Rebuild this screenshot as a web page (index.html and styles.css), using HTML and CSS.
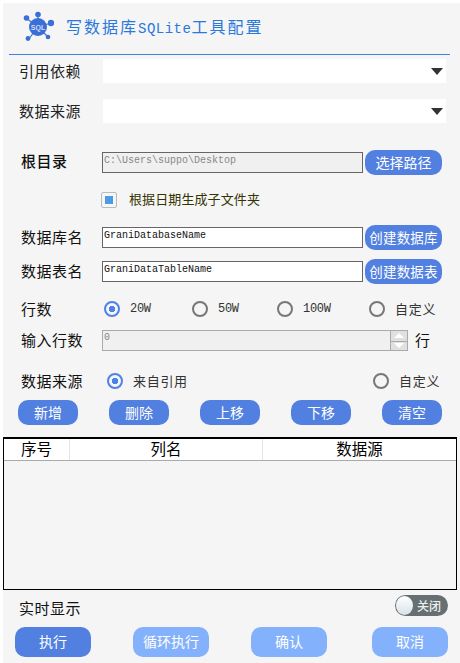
FILE: index.html
```html
<!doctype html>
<html>
<head>
	<title>写数据库SQLite工具配置</title>
	<meta charset="utf-8"/>
	<link rel="stylesheet" href="styles.css">
</head>
<body>
	<div class="app">
		<div class="header">
			<svg class="logo" width="32" height="32" viewBox="0 0 32 32">
				<g stroke="#3a6fd8" stroke-width="1.2">
					<line x1="16" y1="16" x2="4" y2="7"/>
					<line x1="16" y1="16" x2="16" y2="3"/>
					<line x1="16" y1="16" x2="29" y2="12"/>
					<line x1="16" y1="16" x2="6" y2="29"/>
					<line x1="16" y1="16" x2="26" y2="26"/>
				</g>
				<circle cx="4.5" cy="7" r="2.8" fill="#3a6fd8"/>
				<circle cx="16" cy="3.5" r="2.8" fill="#3a6fd8"/>
				<circle cx="29" cy="12" r="3.2" fill="#3a6fd8"/>
				<circle cx="6" cy="27.5" r="2.4" fill="#3a6fd8"/>
				<circle cx="26" cy="26" r="2.3" fill="#3a6fd8"/>
				<circle cx="16" cy="16" r="9" fill="#3a6fd8"/>
				<text x="16" y="18.5" class="logo-text" text-anchor="middle">SQL</text>
			</svg>
			<div class="title">写数据库<span class="latin">SQLite</span>工具配置</div>
		</div>

		<div class="select-row first">
			<span class="select-label">引用依赖</span>
			<div class="select"><span class="caret"></span></div>
		</div>
		<div class="select-row second">
			<span class="select-label">数据来源</span>
			<div class="select"><span class="caret"></span></div>
		</div>

		<div class="form-row root-row">
			<span class="label strong">根目录</span>
			<div class="input disabled">C:\Users\suppo\Desktop</div>
			<div class="btn side">选择路径</div>
		</div>

		<div class="check-row">
			<span class="checkbox"><span class="check-fill"></span></span>
			<span class="check-label">根据日期生成子文件夹</span>
		</div>

		<div class="form-row db-row">
			<span class="label">数据库名</span>
			<div class="input">GraniDatabaseName</div>
			<div class="btn side tight">创建数据库</div>
		</div>
		<div class="form-row table-row">
			<span class="label">数据表名</span>
			<div class="input">GraniDataTableName</div>
			<div class="btn side tight">创建数据表</div>
		</div>

		<div class="radio-row">
			<span class="label">行数</span>
			<div class="radio-item w20"><span class="radio on"></span><span class="radio-text mono">20W</span></div>
			<div class="radio-item w50"><span class="radio"></span><span class="radio-text mono">50W</span></div>
			<div class="radio-item w100"><span class="radio"></span><span class="radio-text mono">100W</span></div>
			<div class="radio-item"><span class="radio"></span><span class="radio-text">自定义</span></div>
		</div>

		<div class="count-row">
			<span class="label">输入行数</span>
			<div class="spin">
				<div class="spin-value">0</div>
				<div class="spin-btns">
					<div class="spin-btn"><span class="up"></span></div>
					<div class="spin-btn"><span class="down"></span></div>
				</div>
			</div>
			<span class="unit">行</span>
		</div>

		<div class="source-row">
			<span class="label">数据来源</span>
			<div class="radio-item from-ref"><span class="radio on"></span><span class="radio-text">来自引用</span></div>
			<div class="radio-item from-custom"><span class="radio"></span><span class="radio-text">自定义</span></div>
		</div>

		<div class="action-row">
			<div class="btn action">新增</div>
			<div class="btn action">删除</div>
			<div class="btn action">上移</div>
			<div class="btn action">下移</div>
			<div class="btn action">清空</div>
		</div>

		<div class="grid">
			<div class="grid-head">
				<div class="cell c1">序号</div>
				<div class="cell c2">列名</div>
				<div class="cell c3">数据源</div>
			</div>
		</div>

		<div class="live-row">
			<span class="live-label">实时显示</span>
			<div class="toggle"><span class="knob"></span><span class="toggle-text">关闭</span></div>
		</div>

		<div class="bottom-row">
			<div class="btn big">执行</div>
			<div class="btn big light">循环执行</div>
			<div class="btn big light">确认</div>
			<div class="btn big light">取消</div>
		</div>
	</div>
</body>
</html>
```

FILE: styles.css
```css
* {
	box-sizing: border-box;
}
html, body {
	margin: 0;
	height: 663px;
	overflow: hidden;
	background-color: #fff;
}
body {
	font-family: "Noto Sans CJK SC", "Noto Sans", sans-serif;
	color: #111;
}
.app {
	margin: 3px 0 0 3px;
	width: 457px;
	height: 660px;
	background-color: #f5f5f5;
}

/* header */
.header {
	display: flex;
	align-items: center;
	height: 52px;
	margin: 0 10px 0 6px;
	padding: 0 0 3px 13px;
	border-bottom: 1px solid #3f80e0;
}
.logo {
	flex: none;
}
.logo-text {
	font-family: "Liberation Sans", sans-serif;
	font-size: 7px;
	font-weight: bold;
	fill: #cfdcf6;
}
.title {
	margin-left: 12px;
	padding-bottom: 2px;
	font-size: 16px;
	letter-spacing: 2px;
	color: #2a78dc;
	white-space: nowrap;
}
.latin {
	font-family: "Liberation Mono", monospace;
	font-size: 14px;
	letter-spacing: 0.5px;
}

/* selects */
.select-row {
	display: flex;
	align-items: center;
	height: 24px;
	padding-left: 16px;
}
.select-row.first {
	margin-top: 4px;
}
.select-row.second {
	margin-top: 16px;
}
.select-label {
	width: 84px;
	padding-bottom: 2px;
	font-size: 15px;
	letter-spacing: 0.5px;
	color: #222;
}
.select {
	display: flex;
	align-items: center;
	justify-content: flex-end;
	width: 343px;
	height: 24px;
	padding-right: 3px;
	background-color: #fff;
}
.caret {
	width: 0;
	height: 0;
	border-left: 6.5px solid transparent;
	border-right: 6.5px solid transparent;
	border-top: 7px solid #333;
}

/* form rows */
.form-row {
	display: flex;
	align-items: center;
	height: 25px;
	padding-left: 18px;
}
.root-row {
	margin-top: 27px;
}
.db-row {
	margin-top: 17px;
}
.table-row {
	margin-top: 9px;
}
.label {
	flex: none;
	width: 81px;
	padding-bottom: 2px;
	font-size: 15px;
	letter-spacing: 0.5px;
	color: #111;
}
.strong {
	padding-bottom: 4px;
	font-weight: 500;
}
.input {
	width: 261px;
	height: 21px;
	padding: 1px 0 2px 1px;
	border: 1px solid #666;
	background-color: #fff;
	font-family: "Liberation Mono", monospace;
	font-size: 10px;
	line-height: 14px;
	color: #111;
}
.input.disabled {
	background-color: #f0f0f0;
	color: #888;
}
.btn {
	display: flex;
	align-items: center;
	justify-content: center;
	padding-bottom: 2px;
	border-radius: 10px;
	background-color: #5280e0;
	color: #fff;
	white-space: nowrap;
}
.side {
	width: 77px;
	height: 25px;
	margin-left: 2px;
	font-size: 14px;
}
.side.tight {
	font-size: 13.5px;
	letter-spacing: 0.2px;
}

/* checkbox */
.check-row {
	display: flex;
	align-items: center;
	height: 16px;
	margin-top: 17px;
	padding-left: 98px;
}
.checkbox {
	display: flex;
	align-items: center;
	justify-content: center;
	width: 16px;
	height: 16px;
	border: 1px solid #bbb;
	border-radius: 2px;
}
.check-fill {
	width: 8px;
	height: 8px;
	background-color: #4a9be4;
}
.check-label {
	margin-left: 12px;
	padding-bottom: 3px;
	font-size: 13px;
	letter-spacing: 0.1px;
	color: #333300;
}

/* radios */
.radio-row {
	display: flex;
	align-items: center;
	height: 20px;
	margin-top: 15px;
	padding-left: 18px;
}
.radio-row .label {
	width: 83px;
}
.radio-item {
	display: flex;
	align-items: center;
}
.w20 {
	width: 88px;
}
.w50 {
	width: 85px;
}
.w100 {
	width: 92px;
}
.radio {
	flex: none;
	width: 16px;
	height: 16px;
	border: 2px solid #777;
	border-radius: 50%;
	background-color: #f5f5f5;
}
.radio.on {
	border-color: #4f82e6;
	background: radial-gradient(circle, #4f82e6 0 3px, #f5f5f5 3.5px);
}
.radio-text {
	margin-left: 10px;
	padding-bottom: 2px;
	font-size: 13px;
	letter-spacing: 0.7px;
	color: #333;
}
.radio-text.mono {
	padding-bottom: 0;
	font-family: "Liberation Mono", monospace;
	font-size: 12px;
	letter-spacing: -0.3px;
}

/* spin box */
.count-row {
	display: flex;
	align-items: center;
	height: 21px;
	margin-top: 11px;
	padding-left: 18px;
}
.spin {
	display: flex;
	width: 306px;
	height: 21px;
	border: 1px solid #aaa;
	background-color: #f0f0f0;
}
.spin-value {
	flex: 1;
	padding-left: 1px;
	font-family: "Liberation Mono", monospace;
	font-size: 10px;
	line-height: 14px;
	color: #888;
}
.spin-btns {
	width: 17px;
	border-left: 1px solid #aaa;
}
.spin-btn {
	display: flex;
	align-items: center;
	justify-content: center;
	height: 50%;
	background-color: #e0e0e0;
}
.spin-btn + .spin-btn {
	border-top: 1px solid #aaa;
}
.up, .down {
	width: 0;
	height: 0;
	border-left: 5px solid transparent;
	border-right: 5px solid transparent;
}
.up {
	border-bottom: 5px solid #fff;
}
.down {
	border-top: 5px solid #fff;
}
.unit {
	margin-left: 7px;
	padding-bottom: 2px;
	font-size: 15px;
}

/* data source */
.source-row {
	display: flex;
	align-items: center;
	height: 20px;
	margin-top: 20px;
	padding-left: 18px;
}
.source-row .label {
	width: 86px;
}
.from-ref {
	width: 266px;
}
.action-row {
	display: flex;
	justify-content: space-between;
	width: 424px;
	margin-top: 9px;
	margin-left: 15px;
}
.action {
	width: 60px;
	height: 25px;
	font-size: 14px;
}

/* table */
.grid {
	width: 454px;
	height: 153px;
	margin-top: 12px;
	border: 1px solid #000;
	border-top-width: 2px;
	background-color: #f5f5f5;
}
.grid-head {
	display: flex;
	height: 22px;
	background-color: #fff;
	border-bottom: 1px solid #aaa;
}
.cell {
	font-size: 15.5px;
	line-height: 19px;
	text-align: center;
	color: #000;
	border-right: 1px solid #e4e4e4;
}
.c1 {
	width: 66px;
}
.c2 {
	width: 193px;
}
.c3 {
	flex: 1;
	border-right: none;
}

/* bottom */
.live-row {
	display: flex;
	align-items: center;
	justify-content: space-between;
	width: 445px;
	height: 21px;
	margin-top: 5px;
	padding-left: 16px;
}
.live-label {
	margin-top: 4px;
	font-size: 15px;
	letter-spacing: 0.5px;
	color: #111;
}
.toggle {
	display: flex;
	align-items: center;
	width: 53px;
	height: 21px;
	padding-left: 1px;
	border-radius: 11px;
	background-color: #667073;
}
.knob {
	width: 17px;
	height: 19px;
	border-radius: 50%;
	background: linear-gradient(#fff, #d8e2ea);
}
.toggle-text {
	margin-left: 4px;
	font-size: 12px;
	font-weight: 500;
	color: #eee;
}
.bottom-row {
	display: flex;
	gap: 42px;
	margin-top: 11px;
	margin-left: 12px;
}
.big {
	width: 76px;
	height: 30px;
	font-size: 14px;
}
.big:last-child {
	margin-left: 3px;
}
.light {
	background-color: #84b1fc;
}
```
